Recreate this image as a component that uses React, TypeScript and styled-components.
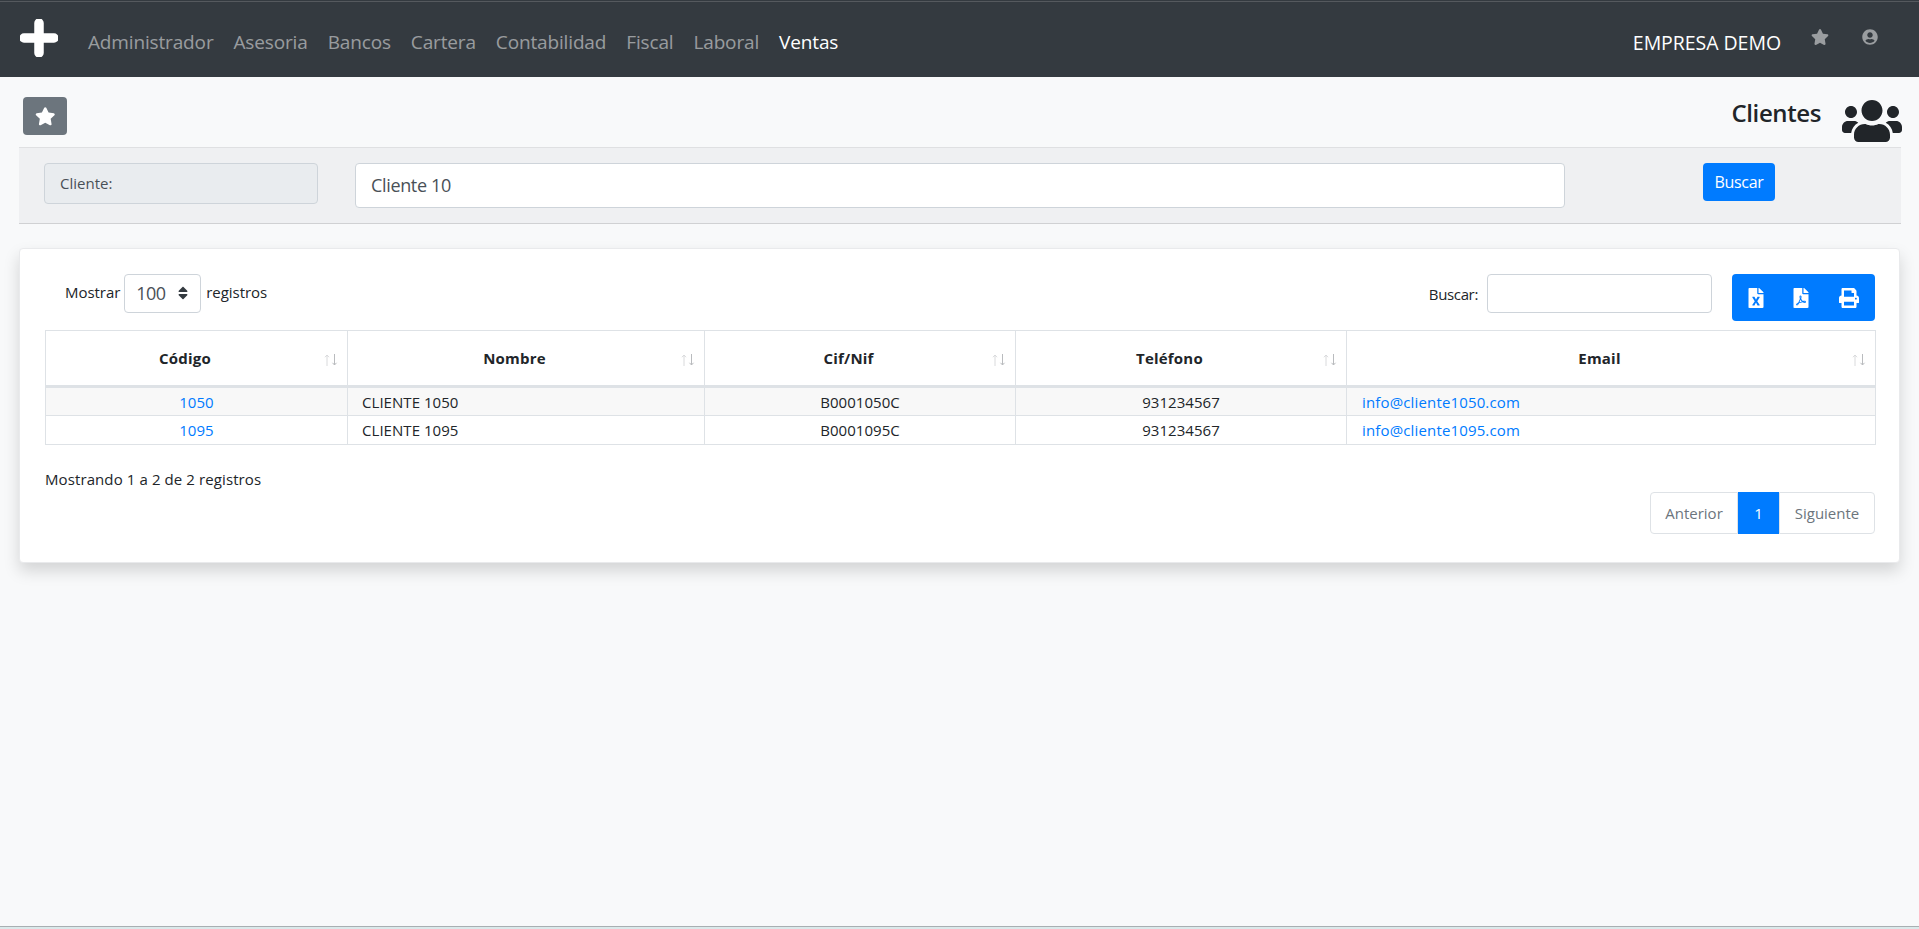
import React from "react";
import styled, { createGlobalStyle } from "styled-components";
import { FaStar, FaUserCircle, FaUsers, FaFileExcel, FaFilePdf, FaPrint, FaSort } from "react-icons/fa";

const Global = createGlobalStyle`
  * { box-sizing: border-box; }
  html, body { margin: 0; padding: 0; height: 100%; }
  body { background: #f8f9fa; color: #212529; font-family: "Open Sans", "Noto Sans", "Liberation Sans", sans-serif; font-size: 15px; }
`;

const Page = styled.div`
  min-height: 929px; height: 929px; overflow: hidden;
  display: flex; flex-direction: column;
`;
const Nav = styled.nav`
  height: 77px; flex: none;
  background: #343a40; border-top: 1px solid #343a40; box-shadow: inset 0 1px 0 #55595e;
  display: flex; align-items: center;
  padding: 0 41px 0 20px;
`;
const Logo = styled.svg`
  width: 38px; height: 38px; margin-right: 20px; margin-top: -3px; flex: none;
`;
const NavLink = styled.a<{ $active?: boolean }>`
  padding: 0 10px; font-size: 19px; letter-spacing: -0.15px;
  color: ${(p) => (p.$active ? "#fff" : "rgba(255,255,255,.5)")};
  font-weight: ${(p) => (p.$active ? 500 : 400)};
  margin-top: 6px;
`;
const NavRight = styled.div`
  margin-left: auto; display: flex; align-items: center; color: #fff;
`;
const Company = styled.span`
  font-size: 19.5px; letter-spacing: -0.05px; margin-right: 30px; margin-top: 6px;
`;
const NavIcon = styled.span<{ $gap?: number; $size: number }>`
  display: flex; color: rgba(255,255,255,.5); font-size: ${(p) => p.$size}px; margin-left: ${(p) => p.$gap ?? 0}px; margin-top: -4px;
`;
const Main = styled.main`
  flex: 1; padding: 0 18px 0 19px;
`;
const TitleRow = styled.div`
  height: 70px; display: flex; justify-content: space-between; align-items: flex-start;
  padding: 20px 0 0 4px; margin-right: -1px;
`;
const StarButton = styled.button`
  width: 44px; height: 38px; background: #6c757d; border: 0; border-radius: 4px; color: #fff;
  display: flex; align-items: center; justify-content: center; font-size: 20.5px; padding: 0;
`;
const TitleBox = styled.div`
  display: flex; align-items: flex-start; margin-top: -6px;
`;
const Title = styled.h1`
  margin: 6px 21px 0 0; font-size: 24px; font-weight: 600; letter-spacing: -0.4px; line-height: 32px;
`;
const FilterBar = styled.div`
  height: 77px; background: #eff0f2; border-top: 1px solid #dfe0e2; border-bottom: 1px solid #d0d1d3;
  display: flex; align-items: flex-start; padding-top: 15px; padding-left: 25px;
`;
const FilterLabel = styled.div`
  width: 274px; height: 41px; background: #e9ecef; border: 1px solid #ced4da; border-radius: 4px;
  display: flex; align-items: center; padding: 0 0 2px 15px; font-size: 15px; color: #495057; flex: none;
`;
const FilterInput = styled.input`
  width: 1210px; height: 45px; margin-left: 37px; border: 1px solid #ced4da; border-radius: 4px; background: #fff;
  padding: 0 15px 2px; font: inherit; font-size: 18px; letter-spacing: -0.35px; color: #495057; flex: none;
`;
const PrimaryButton = styled.button`
  width: 72px; height: 38px; margin-left: 138px; background: #007bff; color: #fff; border: 0; border-radius: 4px;
  font: inherit; font-size: 16px; letter-spacing: -0.3px; padding: 0; flex: none;
`;
const Card = styled.section`
  margin: 24px 1px 0 0; height: 315px; background: #fff; border-radius: 4px; border: 1px solid #e9eaec;
  box-shadow: 0 8px 16px rgba(0,0,0,.15);
  padding: 25px 24px 0 25px; color: #212529;
`;
const Controls = styled.div`
  height: 56px; display: flex; align-items: flex-start;
`;
const Length = styled.div`
  display: flex; align-items: center; height: 39px; padding-left: 20px; font-size: 15px; letter-spacing: -0.05px;
`;
const LengthText = styled.span`
  margin-top: -3px;
`;
const SelectBox = styled.div`
  width: 77px; height: 39px; margin: 0 5px 0 4px; border: 1px solid #ced4da; border-radius: 4px;
  display: flex; align-items: center; padding: 0 0 2px 11px; gap: 9px; color: #495057; font-size: 18px; letter-spacing: -0.5px;
  svg { color: #343a40; font-size: 16px; }
`;
const SearchLabel = styled.label`
  margin-left: auto; height: 39px; display: flex; align-items: center; font-size: 15px; letter-spacing: -0.35px;
`;
const SearchInput = styled.input`
  width: 225px; height: 39px; margin-left: 9px; border: 1px solid #ced4da; border-radius: 4px; background: #fff;
`;
const Export = styled.div`
  width: 143px; height: 47px; margin-left: 20px; background: #007bff; border-radius: 4px; overflow: hidden;
  display: grid; grid-template-columns: 47px 44px 52px;
`;
const ExportButton = styled.button`
  background: none; border: 0; color: #fff; font-size: 20px; padding: 0; display: flex; align-items: center; justify-content: center;
`;
const Table = styled.table`
  width: 1830px; table-layout: fixed; border-collapse: collapse; font-size: 15px; letter-spacing: 0.05px;
`;
const Head = styled.th`
  position: relative; height: 56px; padding: 0 33px 0 10px; border: 1px solid #dee2e6; border-bottom: 3px solid #dee2e6;
  font-weight: 700; text-align: center; letter-spacing: 0.2px;
`;
const SortMark = styled.svg`
  position: absolute; right: 9px; top: 23px; width: 14px; height: 12px;
`;
const Cell = styled.td<{ $center?: boolean; $odd?: boolean }>`
  height: 29px; padding: 0 14px; border: 1px solid #dee2e6; text-align: ${(p) => (p.$center ? "center" : "left")};
  background: ${(p) => (p.$odd ? "#f8f8f8" : "#fff")};
`;
const CellLink = styled.a`
  color: #007bff;
`;
const EmailLink = styled(CellLink)`
  letter-spacing: 0.15px; margin-left: 1px;
`;
const Info = styled.div`
  margin-top: 22px; height: 24px; line-height: 24px; font-size: 15px; letter-spacing: 0.1px;
`;
const Pager = styled.div`
  display: flex; justify-content: flex-end; margin-top: 1px;
`;
const PageItem = styled.span<{ $active?: boolean; $w: number; $pos?: "first" | "last" }>`
  width: ${(p) => p.$w}px; height: 42px; display: flex; align-items: center; justify-content: center;
  font-size: 15px;
  color: ${(p) => (p.$active ? "#fff" : "#6c757d")};
  background: ${(p) => (p.$active ? "#007bff" : "#fff")};
  border: 1px solid ${(p) => (p.$active ? "#007bff" : "#dee2e6")};
  border-radius: ${(p) => (p.$pos === "first" ? "4px 0 0 4px" : p.$pos === "last" ? "0 4px 4px 0" : "0")};
`;
const BottomEdge = styled.div`
  height: 3px; flex: none; background: #dbe9ea; border-top: 1px solid #a9afb2;
`;

const links = ["Administrador", "Asesoria", "Bancos", "Cartera", "Contabilidad", "Fiscal", "Laboral"];
const cols = [
  { t: "Código", w: 302 },
  { t: "Nombre", w: 357 },
  { t: "Cif/Nif", w: 311 },
  { t: "Teléfono", w: 331 },
  { t: "Email", w: 529 },
];
const rows = [
  { c: "1050", n: "CLIENTE 1050", f: "B0001050C", p: "931234567", e: "info@cliente1050.com" },
  { c: "1095", n: "CLIENTE 1095", f: "B0001095C", p: "931234567", e: "info@cliente1095.com" },
];

const Sort = () => (
  <SortMark viewBox="0 0 14 12" fill="none" strokeWidth="1">
    <path d="M3 12V1M1 3.2L3 1l2 2.2" stroke="#d9dadc" />
    <path d="M10.5 0v11M8.5 8.8l2 2.2 2-2.2" stroke="#b9bbbe" />
  </SortMark>
);

export default function App() {
  return (
    <Page>
      <Global />
      <Nav>
        <Logo viewBox="0 0 38 38">
          <path d="M19 4v30M4 19h30" stroke="#fff" strokeWidth="9.5" strokeLinecap="round" fill="none" />
        </Logo>
        {links.map((l) => (
          <NavLink key={l}>{l}</NavLink>
        ))}
        <NavLink $active>Ventas</NavLink>
        <NavRight>
          <Company>EMPRESA DEMO</Company>
          <NavIcon $size={18}><FaStar /></NavIcon>
          <NavIcon $size={16} $gap={33}><FaUserCircle /></NavIcon>
        </NavRight>
      </Nav>
      <Main>
        <TitleRow>
          <StarButton aria-label="Favorito"><FaStar /></StarButton>
          <TitleBox>
            <Title>Clientes</Title>
            <FaUsers size={60} />
          </TitleBox>
        </TitleRow>
        <FilterBar>
          <FilterLabel>Cliente:</FilterLabel>
          <FilterInput defaultValue="Cliente 10" />
          <PrimaryButton>Buscar</PrimaryButton>
        </FilterBar>
        <Card>
          <Controls>
            <Length>
              <LengthText>Mostrar</LengthText>
              <SelectBox>100 <FaSort /></SelectBox>
              <LengthText>registros</LengthText>
            </Length>
            <SearchLabel>
              Buscar:
              <SearchInput />
            </SearchLabel>
            <Export>
              <ExportButton aria-label="Excel"><FaFileExcel /></ExportButton>
              <ExportButton aria-label="PDF"><FaFilePdf /></ExportButton>
              <ExportButton aria-label="Imprimir"><FaPrint /></ExportButton>
            </Export>
          </Controls>
          <Table>
            <colgroup>
              {cols.map((c) => (
                <col key={c.t} width={c.w} />
              ))}
            </colgroup>
            <thead>
              <tr>
                {cols.map((c) => (
                  <Head key={c.t}>{c.t}<Sort /></Head>
                ))}
              </tr>
            </thead>
            <tbody>
              {rows.map((r, i) => (
                <tr key={r.c}>
                  <Cell $center $odd={i === 0}><CellLink>{r.c}</CellLink></Cell>
                  <Cell $odd={i === 0}>{r.n}</Cell>
                  <Cell $center $odd={i === 0}>{r.f}</Cell>
                  <Cell $center $odd={i === 0}>{r.p}</Cell>
                  <Cell $odd={i === 0}><EmailLink>{r.e}</EmailLink></Cell>
                </tr>
              ))}
            </tbody>
          </Table>
          <Info>Mostrando 1 a 2 de 2 registros</Info>
          <Pager>
            <PageItem $w={88} $pos="first">Anterior</PageItem>
            <PageItem $w={41} $active>1</PageItem>
            <PageItem $w={96} $pos="last">Siguiente</PageItem>
          </Pager>
        </Card>
      </Main>
      <BottomEdge />
    </Page>
  );
}
